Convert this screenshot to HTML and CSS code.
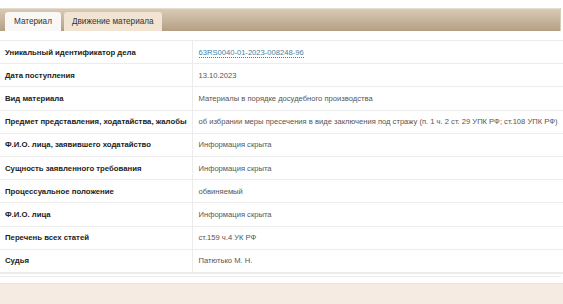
FILE: index.html
```html
<!DOCTYPE html>
<html lang="ru">
<head>
    <meta charset="UTF-8">
    <title>Материал</title>
    <link rel="stylesheet" href="styles.css">
</head>
<body>

<div class="page">
    <div class="tabs">
        <div class="tab active">Материал</div>
        <div class="tab">Движение материала</div>
    </div>

    <div class="content">
        <table class="info">
            <colgroup>
                <col class="col-label">
                <col>
            </colgroup>
            <tr>
                <td class="label">Уникальный идентификатор дела</td>
                <td><a class="uid" href="#">63RS0040-01-2023-008248-96</a></td>
            </tr>
            <tr>
                <td class="label">Дата поступления</td>
                <td>13.10.2023</td>
            </tr>
            <tr>
                <td class="label">Вид материала</td>
                <td>Материалы в порядке досудебного производства</td>
            </tr>
            <tr>
                <td class="label">Предмет представления, ходатайства, жалобы</td>
                <td>об избрании меры пресечения в виде заключения под стражу (п. 1 ч. 2 ст. 29 УПК РФ; ст.108 УПК РФ)</td>
            </tr>
            <tr>
                <td class="label">Ф.И.О. лица, заявившего ходатайство</td>
                <td>Информация скрыта</td>
            </tr>
            <tr>
                <td class="label">Сущность заявленного требования</td>
                <td>Информация скрыта</td>
            </tr>
            <tr>
                <td class="label">Процессуальное положение</td>
                <td>обвиняемый</td>
            </tr>
            <tr>
                <td class="label">Ф.И.О. лица</td>
                <td>Информация скрыта</td>
            </tr>
            <tr>
                <td class="label">Перечень всех статей</td>
                <td>ст.159 ч.4 УК РФ</td>
            </tr>
            <tr>
                <td class="label">Судья</td>
                <td>Патютько М. Н.</td>
            </tr>
        </table>
    </div>
</div>

<div class="footer"></div>

</body>
</html>
```

FILE: styles.css
```css
body {
    margin: 0;
    padding: 0;
    background-color: #fff;
    font-family: "Liberation Sans", Arial, sans-serif;
    color: #444;
    overflow: hidden;
}
.page {
    padding-top: 8px;
    width: 561px;
}
.tabs {
    display: flex;
    align-items: flex-end;
    gap: 3px;
    height: 22px;
    padding-left: 5px;
    border-top: 1px solid #e6ddd0;
    border-right: 1px solid #d8ccbb;
    background: linear-gradient(#d9cab5, #b49f83);
}
.tab {
    height: 19px;
    padding: 0 8px;
    line-height: 20px;
    font-size: 8.2px;
    color: #333;
    background-color: #f1e4d3;
    border-radius: 3px 3px 0 0;
}
.tab.active {
    background-color: #f9f8f6;
    padding: 0 9px;
}
.content {
    padding: 9px 0 2px 0;
    border-bottom: 1px solid #ececec;
}
.info {
    width: 563px;
    table-layout: fixed;
    border-collapse: collapse;
    border-top: 1px solid #ececec;
    border-bottom: 2px solid #ececec;
}
.col-label {
    width: 192px;
}
.info td {
    height: 22.2px;
    padding: 0 0 0 6px;
    font-size: 7.6px;
    color: #555;
    border-top: 1px solid #ececec;
    white-space: nowrap;
    overflow: hidden;
}
.info td + td {
    border-left: 1px solid #ececec;
}
.info td.label {
    padding-left: 5px;
    font-size: 7.75px;
    font-weight: bold;
    color: #222;
}
.uid {
    color: #3f7fa4;
    text-decoration: none;
    border-bottom: 1px dotted #3f7fa4;
}
.footer {
    margin-top: 6px;
    height: 40px;
    background-color: #f5ebe2;
    border-top: 1px solid #efe2d6;
}
```
